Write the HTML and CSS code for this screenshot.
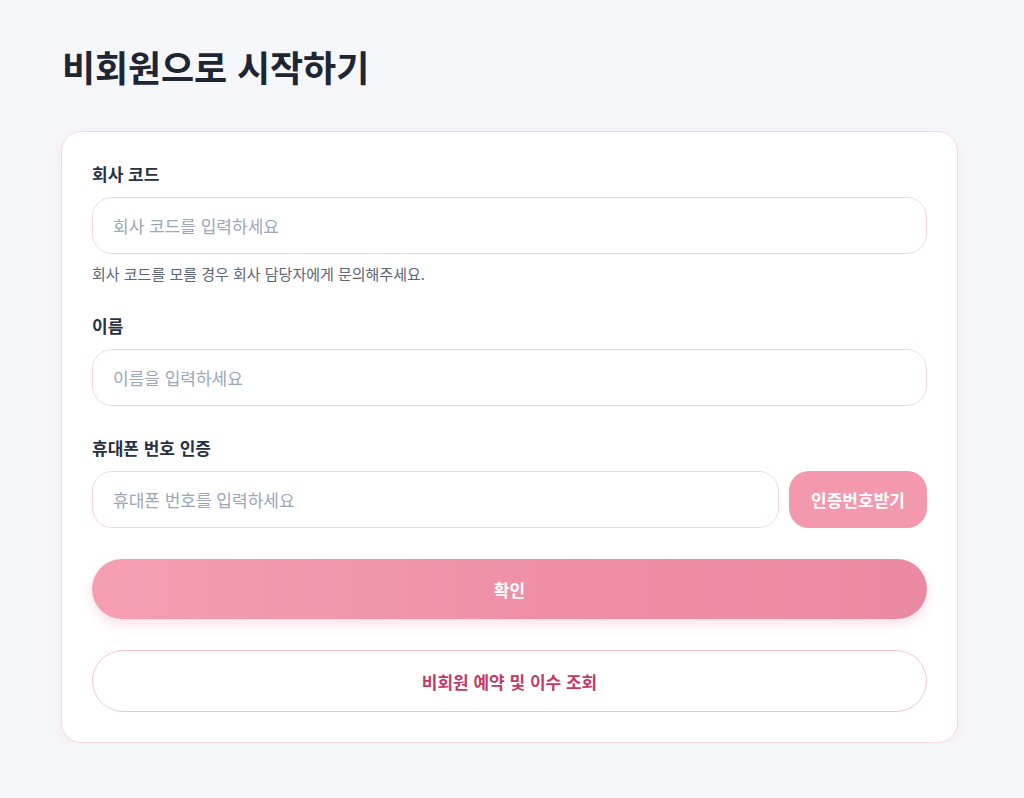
FILE: index.html
```html
<!DOCTYPE html>
<html lang="ko">
<head>
<meta charset="utf-8">
<title>비회원으로 시작하기</title>
<link rel="stylesheet" href="styles.css">
</head>
<body>
<main class="page">
  <h1 class="title">비회원으로 시작하기</h1>
  <section class="card">
    <div class="field">
      <label class="label">회사 코드</label>
      <input class="input" type="text" placeholder="회사 코드를 입력하세요">
      <p class="help">회사 코드를 모를 경우 회사 담당자에게 문의해주세요.</p>
    </div>
    <div class="field">
      <label class="label">이름</label>
      <input class="input" type="text" placeholder="이름을 입력하세요">
    </div>
    <div class="field">
      <label class="label">휴대폰 번호 인증</label>
      <div class="row">
        <input class="input grow" type="text" placeholder="휴대폰 번호를 입력하세요">
        <button class="btn-verify" type="button">인증번호받기</button>
      </div>
    </div>
    <button class="btn-primary" type="button">확인</button>
    <button class="btn-outline" type="button">비회원 예약 및 이수 조회</button>
  </section>
</main>
</body>
</html>
```

FILE: styles.css
```css
* { box-sizing: border-box; }
html, body {
  margin: 0;
  padding: 0;
  background: #f6f7fb;
  font-family: "Noto Sans CJK KR", "Noto Sans", sans-serif;
  color: #1f2937;
}
.page {
  width: 897px;
  margin-left: 61px;
  padding-top: 42px;
}
.title {
  margin: 0 0 0 1px;
  font-size: 36px;
  line-height: 48px;
  font-weight: 700;
  color: #1e2533;
  letter-spacing: -0.1px;
}
.card {
  margin-top: 41px;
  background: #ffffff;
  border: 1px solid #f7d6de;
  border-radius: 20px;
  padding: 30px 30px 30px 30px;
  box-shadow: 0 6px 20px rgba(236, 140, 165, 0.10);
  display: flex;
  flex-direction: column;
}
.field {
  display: flex;
  flex-direction: column;
  margin-bottom: 30px;
}
.label {
  font-size: 17px;
  line-height: 24px;
  font-weight: 700;
  color: #273142;
  margin-bottom: 11px;
}
.input {
  height: 57px;
  width: 100%;
  border: 1px solid #f7d4dd;
  border-radius: 20px;
  padding: 0 20px;
  font-family: inherit;
  font-size: 17px;
  color: #1f2937;
  background: #fff;
  outline: none;
}
.input::placeholder { color: #9ba6b9; }
.help {
  margin: 10px 0 0;
  font-size: 15px;
  line-height: 20px;
  color: #5c6574;
}
.row {
  display: flex;
  gap: 10px;
}
.grow { flex: 1; width: auto; }
.btn-verify {
  width: 138px;
  height: 57px;
  border: none;
  border-radius: 20px;
  background: #f498ad;
  color: #ffffff;
  font-family: inherit;
  font-size: 17px;
  font-weight: 700;
  padding: 0;
}
.btn-primary {
  height: 60px;
  border: none;
  border-radius: 30px;
  background: linear-gradient(90deg, #f59eb2 0%, #ee8fa6 55%, #e98aa2 100%);
  color: #ffffff;
  font-family: inherit;
  font-size: 17px;
  font-weight: 700;
  box-shadow: 0 5px 12px rgba(236, 130, 160, 0.25);
  margin-top: 1px;
}
.btn-outline {
  margin-top: 31px;
  height: 62px;
  border: 1.5px solid #f5c6d2;
  border-radius: 31px;
  background: #ffffff;
  color: #c13a66;
  font-family: inherit;
  font-size: 17px;
  font-weight: 700;
}
```
